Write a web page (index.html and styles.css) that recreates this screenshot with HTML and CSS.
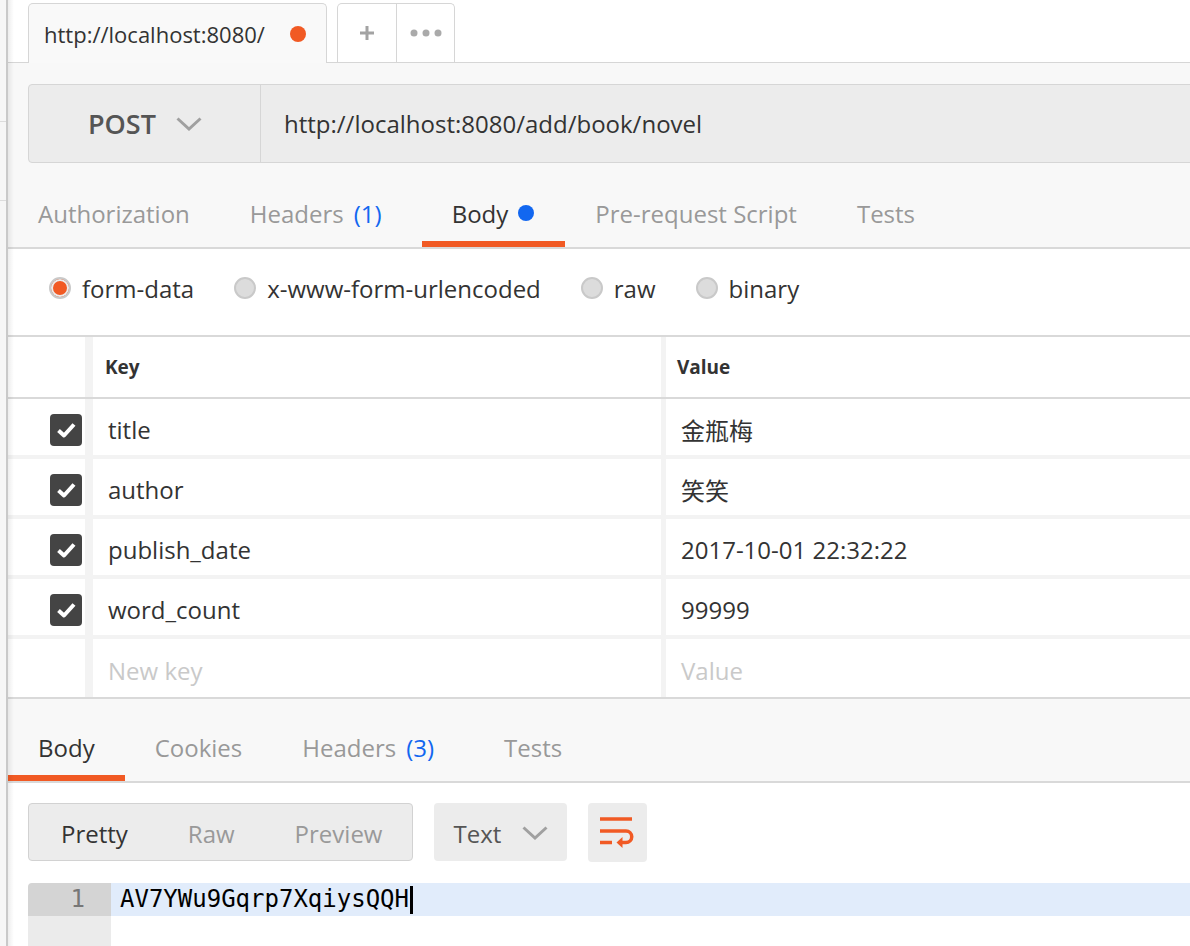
FILE: index.html
```html
<!DOCTYPE html>
<html lang="zh">
<head>
<meta charset="utf-8">
<title>Postman</title>
<link rel="stylesheet" href="styles.css">
</head>
<body>
<div class="app">
  <aside class="strip"><div class="strip-a"></div><div class="strip-b"></div></aside>
  <main class="main">
    <div class="tabbar">
      <div class="req-tab">
        <span class="req-tab-title">http://localhost:8080/</span>
        <span class="req-tab-dot"></span>
      </div>
      <div class="tab-actions">
        <div class="tab-btn tab-btn-plus">
          <svg width="16" height="16" viewBox="0 0 16 16"><path d="M8 1v14M1 8h14" stroke="#a3a3a3" stroke-width="3" fill="none"/></svg>
        </div>
        <div class="tab-btn tab-btn-more">
          <svg width="32" height="8" viewBox="0 0 32 8"><circle cx="4" cy="4" r="3.5" fill="#aaa"/><circle cx="16" cy="4" r="3.5" fill="#aaa"/><circle cx="28" cy="4" r="3.5" fill="#aaa"/></svg>
        </div>
      </div>
    </div>

    <section class="request">
      <div class="urlbar">
        <div class="method">POST
          <svg class="chev" width="26" height="14" viewBox="0 0 26 14"><path d="M1.5 1.5L13 12L24.5 1.5" stroke="#a0a0a0" stroke-width="3" fill="none"/></svg>
        </div>
        <div class="url">http://localhost:8080/add/book/novel</div>
      </div>
      <nav class="tabs">
        <div class="tab-item">Authorization</div>
        <div class="tab-item">Headers<span class="count">(1)</span></div>
        <div class="tab-item active">Body<span class="blue-dot"></span></div>
        <div class="tab-item">Pre-request Script</div>
        <div class="tab-item">Tests</div>
      </nav>
    </section>

    <div class="body-types">
      <label class="radio-opt"><span class="radio checked"></span>form-data</label>
      <label class="radio-opt"><span class="radio"></span>x-www-form-urlencoded</label>
      <label class="radio-opt"><span class="radio"></span>raw</label>
      <label class="radio-opt"><span class="radio"></span>binary</label>
    </div>

    <div class="kv">
      <div class="kv-row kv-head">
        <div class="kv-check"></div>
        <div class="kv-key">Key</div>
        <div class="kv-val">Value</div>
      </div>
      <div class="kv-row">
        <div class="kv-check"><span class="cbox"><svg width="32" height="32" viewBox="0 0 32 32"><path d="M8.5 16.5L14 21.5L24 10.5" stroke="#fff" stroke-width="4" fill="none" stroke-linejoin="round"/></svg></span></div>
        <div class="kv-key">title</div>
        <div class="kv-val">金瓶梅</div>
      </div>
      <div class="kv-row">
        <div class="kv-check"><span class="cbox"><svg width="32" height="32" viewBox="0 0 32 32"><path d="M8.5 16.5L14 21.5L24 10.5" stroke="#fff" stroke-width="4" fill="none" stroke-linejoin="round"/></svg></span></div>
        <div class="kv-key">author</div>
        <div class="kv-val">笑笑</div>
      </div>
      <div class="kv-row">
        <div class="kv-check"><span class="cbox"><svg width="32" height="32" viewBox="0 0 32 32"><path d="M8.5 16.5L14 21.5L24 10.5" stroke="#fff" stroke-width="4" fill="none" stroke-linejoin="round"/></svg></span></div>
        <div class="kv-key">publish_date</div>
        <div class="kv-val">2017-10-01 22:32:22</div>
      </div>
      <div class="kv-row">
        <div class="kv-check"><span class="cbox"><svg width="32" height="32" viewBox="0 0 32 32"><path d="M8.5 16.5L14 21.5L24 10.5" stroke="#fff" stroke-width="4" fill="none" stroke-linejoin="round"/></svg></span></div>
        <div class="kv-key">word_count</div>
        <div class="kv-val">99999</div>
      </div>
      <div class="kv-row kv-new">
        <div class="kv-check"></div>
        <div class="kv-key placeholder">New key</div>
        <div class="kv-val placeholder">Value</div>
      </div>
    </div>

    <section class="response">
      <nav class="tabs resp-tabs">
        <div class="tab-item active">Body</div>
        <div class="tab-item">Cookies</div>
        <div class="tab-item">Headers<span class="count">(3)</span></div>
        <div class="tab-item">Tests</div>
      </nav>
    </section>

    <div class="toolbar">
      <div class="seg">
        <span class="seg-item on">Pretty</span>
        <span class="seg-item">Raw</span>
        <span class="seg-item">Preview</span>
      </div>
      <div class="dropdown">Text
        <svg class="chev" width="26" height="14" viewBox="0 0 26 14"><path d="M1.5 1.5L13 12L24.5 1.5" stroke="#a0a0a0" stroke-width="3" fill="none"/></svg>
      </div>
      <div class="wrap-btn">
        <svg width="59" height="59" viewBox="0 0 59 59">
          <path d="M12 16H44" stroke="#f15a24" stroke-width="3.5" fill="none"/>
          <path d="M12 28H38a5.75 5.75 0 0 1 0 11.5H33" stroke="#f15a24" stroke-width="3.5" fill="none"/>
          <path d="M12 39.5H24" stroke="#f15a24" stroke-width="3.5" fill="none"/>
          <path d="M28.5 39.5L34.5 34V45Z" fill="#f15a24"/>
        </svg>
      </div>
    </div>

    <div class="editor">
      <div class="editor-line">
        <div class="gutter-num">1</div>
        <div class="line-text">AV7YWu9Gqrp7XqiysQQH<span class="cursor"></span></div>
      </div>
      <div class="editor-rest">
        <div class="gutter-fill"></div>
        <div class="text-fill"></div>
      </div>
    </div>
  </main>
</div>
</body>
</html>
```

FILE: styles.css
```css
* { box-sizing: border-box; }
html, body { margin: 0; height: 100%; overflow: hidden; }
body {
  font-family: "Open Sans", "Noto Sans CJK SC", sans-serif;
  font-size: 24px;
  color: #333;
  background: #fff;
}
.app { display: flex; height: 100vh; }

.strip {
  width: 8px;
  flex: none;
  background: #f6f6f6;
  border-right: 2px solid #c9c9c9;
}
.strip-a { height: 122px; border-bottom: 1px solid #dcdcdc; }
.strip-b { height: 79px; border-bottom: 1px solid #dcdcdc; }

.main {
  flex: 1;
  min-width: 0;
  display: flex;
  flex-direction: column;
  position: relative;
  overflow: hidden;
}
.main::after {
  content: "";
  position: absolute;
  left: 0; top: 0; bottom: 0;
  width: 6px;
  background: linear-gradient(to right, rgba(0,0,0,0.07), rgba(0,0,0,0));
  pointer-events: none;
}

/* top tab bar */
.tabbar {
  flex: none;
  height: 63px;
  display: flex;
  align-items: flex-end;
  padding-left: 20px;
  border-bottom: 1px solid #d6d6d6;
  background: #fff;
}
.req-tab {
  width: 299px;
  height: 60px;
  margin-bottom: -1px;
  display: flex;
  align-items: center;
  padding-left: 15px;
  background: #f9f9f9;
  border: 1px solid #d6d6d6;
  border-bottom: none;
  border-radius: 5px 5px 0 0;
  font-size: 22px;
  color: #333;
}
.req-tab-title {
  white-space: nowrap;
}
.req-tab-dot {
  width: 16px; height: 16px;
  border-radius: 50%;
  background: #f15a24;
  margin-left: auto;
  margin-right: 20px;
}
.tab-actions {
  margin-left: 10px;
  height: 59px;
  display: flex;
  background: #fff;
  border: 1px solid #d6d6d6;
  border-bottom: none;
  border-radius: 5px 5px 0 0;
}
.tab-btn {
  display: flex;
  align-items: center;
  justify-content: center;
}
.tab-btn-plus { width: 59px; border-right: 1px solid #d6d6d6; }
.tab-btn-more { width: 57px; }

/* request */
.request {
  flex: none;
  background: #f8f8f8;
  padding-top: 21px;
}
.urlbar {
  height: 79px;
  margin-left: 20px;
  margin-right: -20px;
  display: flex;
  background: #ececec;
  border: 1px solid #d6d6d6;
  border-radius: 4px;
}
.method {
  width: 232px;
  flex: none;
  display: flex;
  align-items: center;
  padding-left: 59px;
  border-right: 1px solid #d6d6d6;
  font-size: 27px;
  font-weight: 600;
  color: #555;
}
.method .chev { margin-left: 20px; }
.url {
  display: flex;
  align-items: center;
  padding-left: 23px;
  font-size: 24px;
  color: #333;
  white-space: nowrap;
}

.tabs {
  display: flex;
  border-bottom: 2px solid #d9d9d9;
}
.tab-item {
  height: 84px;
  padding: 22px 30px 0;
  border-bottom: 6px solid transparent;
  display: flex;
  align-items: center;
  color: #999;
  font-size: 24px;
  white-space: nowrap;
}
.tab-item.active {
  color: #333;
  border-bottom-color: #f15a24;
}
.count { color: #1267f0; margin: 0 10px; }
.blue-dot {
  width: 16px; height: 16px;
  border-radius: 50%;
  background: #1267f0;
  margin-left: 10px;
  margin-right: 1px;
}

/* body types */
.body-types {
  flex: none;
  height: 78px;
  display: flex;
  align-items: center;
  padding-left: 41px;
}
.radio-opt {
  display: flex;
  align-items: center;
  margin-right: 40px;
  color: #333;
  white-space: nowrap;
}
.radio {
  width: 22px; height: 22px;
  border-radius: 50%;
  background: #dcdcdc;
  border: 2px solid #c9c9c9;
  margin-right: 11px;
}
.radio.checked {
  background: #f15a24;
  box-shadow: inset 0 0 0 2px #ececec;
}

/* key/value table */
.kv {
  flex: none;
  margin-top: 8px;
  border-top: 2px solid #d9d9d9;
  border-bottom: 2px solid #d9d9d9;
}
.kv-row {
  display: grid;
  grid-template-columns: 77px 576px 1fr;
  height: 60px;
  border-bottom: 4px solid #f3f3f3;
}
.kv-row > div {
  display: flex;
  align-items: center;
  padding-top: 5px;
  white-space: nowrap;
}
.kv-row.kv-head { height: 62px; border-bottom: 2px solid #d9d9d9; }
.kv-row.kv-head > div { padding-top: 0; font-size: 19px; font-weight: 700; color: #333; }
.kv-row.kv-new { height: 58px; border-bottom: none; }
.kv-check { justify-content: flex-end; padding-right: 3px; }
.kv-key { border-left: 8px solid #f3f3f3; padding-left: 15px; }
.kv-val { border-left: 5px solid #f3f3f3; padding-left: 15px; }
.kv-row.kv-head .kv-key { padding-left: 12px; }
.kv-row.kv-head .kv-val { padding-left: 11px; }
.placeholder { color: #c9c9c9; }
.cbox {
  width: 32px; height: 32px;
  border-radius: 4px;
  background: #444;
  display: block;
}
.cbox svg { display: block; }

/* response */
.response {
  flex: none;
  background: #f8f8f8;
}
.resp-tabs .tab-item {
  height: 82px;
  padding-top: 20px;
}

.toolbar {
  flex: none;
  margin-top: 20px;
  height: 58px;
  padding-left: 20px;
  display: flex;
  gap: 21px;
}
.seg {
  display: flex;
  background: #ececec;
  border: 1px solid #d2d2d2;
  border-radius: 4px;
  padding-left: 2px;
  padding-top: 2px;
}
.seg-item {
  display: flex;
  align-items: center;
  padding: 0 30px;
  color: #999;
}
.seg-item.on { color: #333; }
.dropdown {
  width: 133px;
  display: flex;
  align-items: center;
  padding-left: 19px;
  padding-top: 2px;
  background: #ececec;
  border-radius: 4px;
  color: #555;
}
.dropdown .chev { margin-left: 21px; }
.wrap-btn {
  width: 59px;
  height: 59px;
  background: #ececec;
  border-radius: 4px;
}
.wrap-btn svg { display: block; }

/* editor */
.editor {
  flex: 1;
  margin-top: 22px;
  margin-left: 20px;
  display: flex;
  flex-direction: column;
  font-family: "DejaVu Sans Mono", monospace;
  font-size: 24px;
}
.editor-line {
  height: 33px;
  display: flex;
}
.gutter-num {
  width: 83px;
  flex: none;
  background: #d4d4d4;
  border-radius: 4px 0 0 0;
  text-align: right;
  padding-right: 26px;
  line-height: 33px;
  color: #777;
}
.line-text {
  flex: 1;
  background: #e1ecfb;
  padding-left: 9px;
  line-height: 33px;
  color: #000;
  white-space: nowrap;
  display: flex;
  align-items: center;
}
.cursor {
  width: 3px;
  height: 28px;
  background: #000;
  margin-left: 1px;
}
.editor-rest {
  flex: 1;
  display: flex;
}
.gutter-fill { width: 83px; flex: none; background: #ebebeb; }
.text-fill { flex: 1; background: #fff; }
```
